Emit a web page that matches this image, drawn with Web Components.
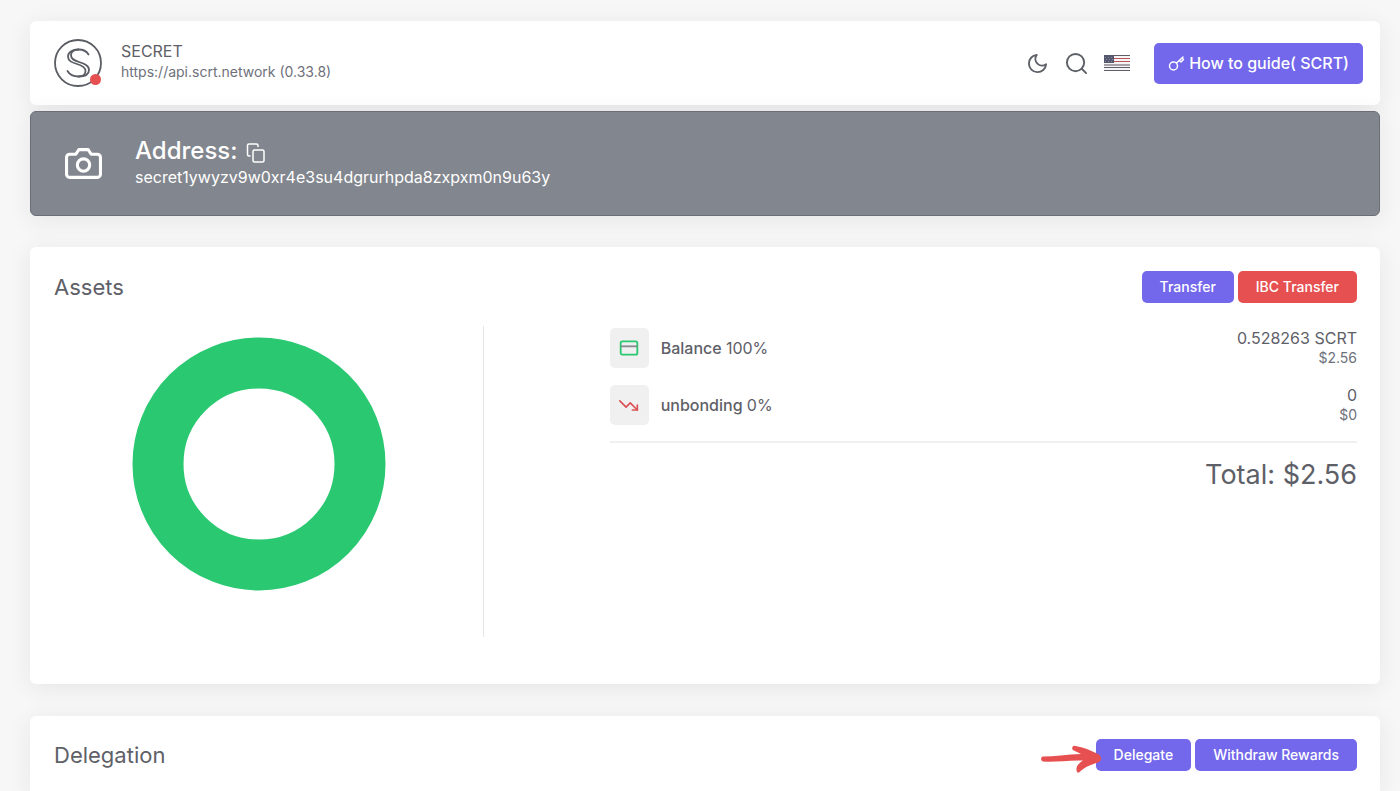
<!DOCTYPE html>
<html lang="en">
<head>
<meta charset="utf-8">
<meta name="viewport" content="width=device-width, initial-scale=1">
<title>SECRET wallet</title>
<style>
  html { background: #f7f7f7; }
  body {
    margin: 0;
    font-family: Inter, "Open Sans", sans-serif;
    font-size: 16px;
    line-height: 24px;
    color: #5e6068;
    --primary: #7367eb;
    --danger: #e65050;
    --success: #2ac971;
    --muted: #6e717b;
    --tile: #f0f0f0;
  }
</style>
</head>
<body>
<wallet-page></wallet-page>

<script>
function define(name, html) {
  const template = document.createElement('template');
  template.innerHTML = html;
  customElements.define(name, class extends HTMLElement {
    constructor() {
      super();
      this.attachShadow({ mode: 'open' }).append(template.content.cloneNode(true));
    }
  });
}

define('ui-card', `
  <style>
    :host { display: block; box-sizing: border-box; background: #fff; border-radius: 6px; box-shadow: 0 4px 24px rgba(34,41,47,.08); }
  </style>
  <slot></slot>`);

define('ui-button', `
  <style>
    :host { display: block; }
    button {
      display: flex; align-items: center; justify-content: center; gap: 4px;
      box-sizing: border-box; width: 100%; height: var(--button-height, 32px); margin: 0;
      padding: 0 var(--button-padding, 18px);
      border: 0; border-radius: 5px; background: var(--button-color, var(--primary));
      color: #fff; font: inherit; font-size: var(--button-font, 14px); font-weight: 500; white-space: nowrap; cursor: pointer;
    }
  </style>
  <button type="button"><slot></slot></button>`);

define('secret-logo', `
  <style>
    :host { display: block; position: relative; width: 48px; height: 48px; }
    svg { display: block; }
    i { position: absolute; right: 1px; bottom: 2px; width: 11px; height: 11px; border-radius: 50%; background: var(--danger); }
  </style>
  <svg width="48" height="48" viewBox="0 0 48 48" fill="none" stroke="#5b5d64" stroke-linecap="round" aria-hidden="true">
    <circle cx="24" cy="24" r="23" stroke-width="1.8"/>
    <g stroke-width="1.8">
      <path d="M34.5 15.5C32.5 12 28.500 10.500 24.500 10.500C18 10.500 14 13.500 14 17.500C14 22 18 23.500 23 25C28 26.500 31.500 28 31.500 32C31.500 35.500 28.500 37.500 24.500 37.500C19.500 37.500 15.500 35.500 13.500 32"/>
      <path d="M24.500 10.500C20 10.500 17 13 17 16.500C17 20 20 21.300 25 23C30.500 24.800 35 26.500 35 31C35 35.300 30.500 37.500 24.500 37.500"/>
    </g>
  </svg><i></i>`);

define('us-flag', `
  <style>:host { display: block; } svg { display: block; }</style>
  <svg width="26" height="16" viewBox="0 0 26 16" aria-label="English">
    <path fill="#f5f5f5" d="M0 0h26v16H0z"/>
    <path stroke="#5f5d65" d="M0 .5h26M0 12.500h26M0 15.500h26"/>
    <path stroke="#b9555b" d="M10 3.500h16M10 6.500h16"/>
    <path stroke="#a8a2a6" stroke-width="2" d="M0 10h26"/>
    <path fill="#55586c" d="M0 0h10v8H0z"/>
    <path stroke="#868aa5" stroke-dasharray="1 2" d="M1 2.500h8M2 4.500h8M1 6.500h8"/>
  </svg>`);

define('app-header', `
  <style>
    :host { display: block; }
    ui-card { display: flex; align-items: center; min-height: 84px; padding: 0 17px 0 24px; }
    .name { flex: 1; margin-left: 19px; padding-bottom: 4px; }
    h1 { margin: 0; font-size: 16px; font-weight: 400; line-height: 22px; }
    p { margin: 0; font-size: 14px; line-height: 20px; color: var(--muted); }
    nav { display: flex; align-items: center; gap: 16px; margin-right: 24px; }
    .icon { display: block; padding: 0; border: 0; background: none; color: #5e6068; cursor: pointer; }
    .icon svg { display: block; }
    ui-button { --button-height: 41px; --button-padding: 14px; --button-font: 16px; }
  </style>
  <ui-card>
    <secret-logo></secret-logo>
    <div class="name"><h1>SECRET</h1><p>https://api.scrt.network (0.33.8)</p></div>
    <nav>
      <button class="icon" type="button" aria-label="Dark mode">
        <svg width="23" height="23" viewBox="0 0 24 24" fill="none" stroke="currentColor" stroke-width="2" stroke-linecap="round" stroke-linejoin="round"><path d="M21 12.790A9 9 0 1 1 11.210 3 7 7 0 0 0 21 12.790z"/></svg>
      </button>
      <button class="icon" type="button" aria-label="Search">
        <svg width="23" height="23" viewBox="0 0 24 24" fill="none" stroke="currentColor" stroke-width="2" stroke-linecap="round"><circle cx="11" cy="11" r="9"/><path d="m22 22-4.500-4.500"/></svg>
      </button>
      <button class="icon" type="button" aria-label="Language"><us-flag></us-flag></button>
    </nav>
    <ui-button>
      <svg width="17" height="17" viewBox="0 0 17 17" fill="none" stroke="#fff" stroke-width="1.500" stroke-linecap="round" stroke-linejoin="round" aria-hidden="true"><circle cx="5.500" cy="11" r="4"/><path d="m8.500 8 6.500-6M11.500 5.500l1.500 1.500 2.500-2.500L14 3"/></svg>
      <span>How to guide( SCRT)</span>
    </ui-button>
  </ui-card>`);

define('address-banner', `
  <style>
    :host { display: flex; align-items: center; box-sizing: border-box; min-height: 105px; padding: 0 34px; border: 1px solid #6b6e76; border-radius: 6px; background: #82868e; color: #fff; box-shadow: 0 4px 24px rgba(34,41,47,.08); }
    svg { display: block; }
    .text { margin-left: 33px; padding-bottom: 2px; }
    h2 { display: flex; align-items: center; gap: 8px; margin: 0; font-size: 24px; line-height: 28px; font-weight: 500; }
    button { padding: 4px 0 0; border: 0; background: none; color: inherit; cursor: pointer; }
    p { margin: 0; font-size: 16px; line-height: 24px; }
  </style>
  <svg width="37" height="37" viewBox="0 0 24 24" fill="none" stroke="currentColor" stroke-width="2" stroke-linecap="round" stroke-linejoin="round" aria-hidden="true"><path d="M23 19a2 2 0 0 1-2 2H3a2 2 0 0 1-2-2V8a2 2 0 0 1 2-2h4l2-3h6l2 3h4a2 2 0 0 1 2 2z"/><circle cx="12" cy="13" r="4"/></svg>
  <div class="text">
    <h2><span>Address:</span>
      <button type="button" aria-label="Copy address"><svg width="20" height="20" viewBox="0 0 20 20" fill="none" stroke="currentColor" stroke-width="1.500" stroke-linejoin="round"><rect x="7" y="7" width="11" height="12" rx="1.500"/><path d="M4.500 13H3a1.500 1.500 0 0 1-1.500-1.500v-9A1.500 1.500 0 0 1 3 1h7.500A1.500 1.500 0 0 1 12 2.500V4"/></svg></button>
    </h2>
    <p>secret1ywyzv9w0xr4e3su4dgrurhpda8zxpxm0n9u63y</p>
  </div>`);

define('section-head', `
  <style>
    :host { display: flex; align-items: center; justify-content: space-between; }
    h2 { margin: 0; font-size: 22px; line-height: 32px; font-weight: 400; }
    div { display: flex; gap: 4px; }
  </style>
  <h2><slot></slot></h2><div><slot name="actions"></slot></div>`);

define('asset-row', `
  <style>
    :host { display: flex; align-items: center; min-height: 40px; }
    .tile { display: grid; place-items: center; width: 39px; height: 40px; border-radius: 5px; background: var(--tile); }
    .label { flex: 1; margin-left: 12px; font-weight: 500; }
    .value { text-align: right; line-height: 20px; }
    .fiat { font-size: 14px; color: var(--muted); }
  </style>
  <div class="tile"><slot name="icon"></slot></div>
  <div class="label"><slot></slot></div>
  <div class="value"><div><slot name="amount"></slot></div><div class="fiat"><slot name="fiat"></slot></div></div>`);

define('assets-card', `
  <style>
    :host { display: block; }
    ui-card { padding: 24px 23px 47px 24px; }
    .red { --button-color: var(--danger); }
    .body { display: grid; grid-template-columns: 23fr 40fr; column-gap: 126px; margin-top: 23px; }
    .chart { box-sizing: border-box; display: flex; justify-content: center; min-height: 311px; padding: 11px 18px 0 0; border-right: 1px solid #e6e6e8; }
    .rows { display: grid; gap: 17px; padding: 2px 0 16px; border-bottom: 2px solid #f0f0f0; }
    .light { font-weight: 400; }
    .total { margin: 16px 0 0; font-size: 27px; line-height: 32px; text-align: right; }
  </style>
  <ui-card>
    <section-head>Assets
      <ui-button slot="actions">Transfer</ui-button>
      <ui-button slot="actions" class="red">IBC Transfer</ui-button>
    </section-head>
    <div class="body">
      <div class="chart">
        <svg width="254" height="254" viewBox="0 0 254 254" role="img" aria-label="Balance 100%"><circle cx="127" cy="127" r="101" fill="none" stroke="#2ac971" stroke-width="51"/></svg>
      </div>
      <div>
        <div class="rows">
          <asset-row>
            <svg slot="icon" width="20" height="20" viewBox="0 0 24 24" fill="none" stroke-width="2.200" aria-hidden="true"><rect x="2" y="4" width="20" height="16" rx="2" stroke="#2ac971"/><path d="M2 10h20" stroke="#858a8e"/></svg>
            Balance <span class="light">100%</span>
            <span slot="amount">0.528263 SCRT</span><span slot="fiat">$2.56</span>
          </asset-row>
          <asset-row>
            <svg slot="icon" width="20" height="20" viewBox="0 0 24 24" fill="none" stroke="#dc5055" stroke-width="2" stroke-linecap="round" stroke-linejoin="round" aria-hidden="true"><path d="m22 18-8.500-8.500-5 5L1 7"/><path d="M16 18h6v-6"/></svg>
            unbonding <span class="light">0%</span>
            <span slot="amount">0</span><span slot="fiat">$0</span>
          </asset-row>
        </div>
        <p class="total">Total: $2.56</p>
      </div>
    </div>
  </ui-card>`);

define('delegation-card', `
  <style>
    :host { display: flex; }
    ui-card { flex: 1; padding: 23px 23px 20px 24px; border-bottom-left-radius: 0; border-bottom-right-radius: 0; }
    .target { position: relative; }
    .arrow { position: absolute; right: calc(100% - 6px); top: 6px; pointer-events: none; }
  </style>
  <ui-card>
    <section-head>Delegation
      <div slot="actions" class="target">
        <ui-button>Delegate</ui-button>
        <svg class="arrow" width="62" height="30" viewBox="0 0 62 30" fill="#e65050" aria-hidden="true"><path d="M3 11.500C1 11.500 0 15.500 3 16.500C15 17.500 27 15 43 15.500C40 17.500 36 20.500 36.500 24.500C36.500 27 38 29 39.500 27C44 22.500 51 19.500 58 17.500C62 16 62 11 58 9C51 5.500 43 2 35.500 1C32 0 31 4.500 34 5.500L41 9C27 9.500 14 11.500 3 11.500Z"/></svg>
      </div>
      <ui-button slot="actions">Withdraw Rewards</ui-button>
    </section-head>
  </ui-card>`);

define('wallet-page', `
  <style>
    :host { display: block; }
    main { display: flex; flex-direction: column; box-sizing: border-box; min-height: 100vh; padding: 21px 20px 0 30px; }
    address-banner { margin: 6px 0 31px; }
    delegation-card { flex: 1; margin-top: 32px; }
  </style>
  <main>
    <app-header></app-header>
    <address-banner></address-banner>
    <assets-card></assets-card>
    <delegation-card></delegation-card>
  </main>`);
</script>
</body>
</html>
